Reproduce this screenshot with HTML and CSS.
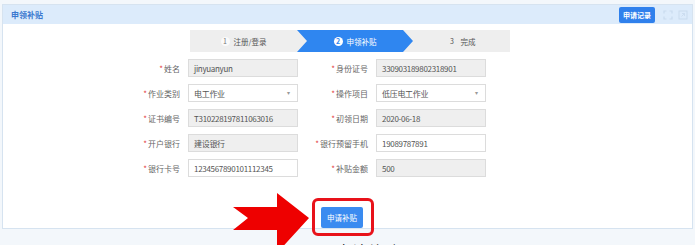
FILE: index.html
```html
<!DOCTYPE html>
<html lang="zh-CN">

<head>
    <meta charset="UTF-8">
    <meta name="viewport" content="width=device-width, initial-scale=1.0">
    <title>申领补贴</title>
    <link rel="stylesheet" href="styles.css">
</head>

<body>
    <div class="panel">
        <div class="panel-head">
            <span class="panel-title">申领补贴</span>
            <div class="head-tools">
                <button class="btn-record">申请记录</button>
                <svg class="tool-icon" width="10" height="10" viewBox="0 0 10 10">
                    <path d="M1 3.5V1h2.5M6.5 1H9v2.5M9 6.5V9H6.5M3.5 9H1V6.5" fill="none" stroke="#c9dbee" stroke-width="1.2"/>
                </svg>
                <svg class="tool-icon" width="10" height="10" viewBox="0 0 10 10">
                    <rect x="1" y="1" width="8" height="8" fill="none" stroke="#c9dbee" stroke-width="1"/>
                    <path d="M3.5 6.5l3-3M4 3.5h2.5V6" fill="none" stroke="#c9dbee" stroke-width="0.9"/>
                </svg>
            </div>
        </div>
        <div class="panel-body">
            <div class="steps">
                <div class="step step-one"><span class="num num-ring">1</span>注册/登录</div>
                <div class="step step-active"><span class="num num-fill">2</span>申领补贴</div>
                <div class="step step-three"><span class="num">3</span>完成</div>
            </div>

            <div class="form">
                <label class="lbl"><i>*</i>姓名</label>
                <div class="field disabled">jinyuanyun</div>
                <label class="lbl"><i>*</i>身份证号</label>
                <div class="field disabled">330903189802318901</div>

                <label class="lbl"><i>*</i>作业类别</label>
                <div class="field select">电工作业<span class="caret">▾</span></div>
                <label class="lbl"><i>*</i>操作项目</label>
                <div class="field select">低压电工作业<span class="caret">▾</span></div>

                <label class="lbl"><i>*</i>证书编号</label>
                <div class="field disabled">T310228197811063016</div>
                <label class="lbl"><i>*</i>初领日期</label>
                <div class="field disabled">2020-06-18</div>

                <label class="lbl"><i>*</i>开户银行</label>
                <div class="field disabled">建设银行</div>
                <label class="lbl"><i>*</i>银行预留手机</label>
                <div class="field">19089787891</div>

                <label class="lbl"><i>*</i>银行卡号</label>
                <div class="field">1234567890101112345</div>
                <label class="lbl"><i>*</i>补贴金额</label>
                <div class="field disabled">500</div>
            </div>

            <div class="actions">
                <span class="highlight">
                    <button class="btn-submit">申请补贴</button>
                    <span class="mark-box"></span>
                    <svg class="mark-arrow" width="78" height="57" viewBox="0 0 78 57">
                        <polygon points="0,14 44,14 44,0 76,25 44,60 44,37 0,37 15,25" fill="#ee0000"/>
                    </svg>
                </span>
            </div>
        </div>
    </div>
    <p class="caption">图 2-3 申请补贴</p>
</body>

</html>
```

FILE: styles.css
```css
body {
    margin: 0;
    padding: 0;
    height: 245px;
    overflow: hidden;
    background-color: #f3f7fb;
    font-family: "Noto Sans CJK SC", "Noto Sans", sans-serif;
    color: #555;
}

.panel {
    margin: 4px 2px 0;
    background-color: #fff;
    border: 1px solid #d6e3f0;
}

.panel-head {
    height: 19px;
    display: flex;
    align-items: center;
    justify-content: space-between;
    padding: 0 4px 0 8px;
    background-color: #dcebfb;
}

.panel-title {
    font-size: 8px;
    font-weight: bold;
    color: #3a78cf;
}

.head-tools {
    display: flex;
    align-items: center;
    gap: 5px;
}

.btn-record {
    height: 16px;
    padding: 0 4px;
    border: none;
    border-radius: 2px;
    background-color: #2f80ec;
    color: #fff;
    font-family: inherit;
    font-size: 7px;
    font-weight: bold;
    margin-right: 3px;
}

.tool-icon {
    display: block;
}

.panel-body {
    padding: 6px 0 5px;
}

/* steps */
.steps {
    display: flex;
    width: 320px;
    height: 22px;
    margin-left: 187px;
    background-color: #eee;
    font-size: 7.5px;
}

.step {
    display: flex;
    align-items: center;
    justify-content: center;
    gap: 4px;
    color: #555;
}

.step-one {
    width: 107px;
}

.step-active {
    width: 116px;
    background-color: #2f86f0;
    color: #fff;
    clip-path: polygon(0 0, 106px 0, 116px 50%, 106px 100%, 0 100%, 10px 50%);
}

.step-three {
    flex: 1;
}

.num {
    display: inline-flex;
    align-items: center;
    justify-content: center;
    width: 9px;
    height: 9px;
    font-size: 7px;
}

.num-ring {
    border-radius: 50%;
    background-color: #fafafa;
    color: #777;
}

.num-fill {
    border-radius: 50%;
    background-color: #fff;
    color: #2f86f0;
    font-weight: bold;
}

/* form */
.form {
    display: grid;
    grid-template-columns: 62px 110px 62px 110px;
    column-gap: 8px;
    row-gap: 7px;
    margin: 7px 0 0 115px;
}

.lbl {
    display: flex;
    align-items: center;
    justify-content: flex-end;
    white-space: nowrap;
    font-size: 8px;
    color: #666;
}

.lbl i {
    font-style: normal;
    color: #e23b3b;
    margin-right: 1px;
}

.field {
    position: relative;
    box-sizing: border-box;
    height: 18px;
    display: flex;
    align-items: center;
    padding: 0 5px;
    border: 1px solid #dcdcdc;
    background-color: #fff;
    font-size: 8px;
    letter-spacing: -0.3px;
    color: #555;
}

.field.disabled {
    background-color: #efefef;
}

.caret {
    position: absolute;
    right: 7px;
    top: 3px;
    font-size: 6px;
    color: #999;
}

/* actions */
.actions {
    margin: 25px 0 0 318px;
    height: 21px;
}

.highlight {
    position: relative;
    display: inline-block;
}

.btn-submit {
    display: block;
    height: 21px;
    padding: 0 6px;
    border: none;
    border-radius: 2px;
    background-color: #3a8bf0;
    color: #fff;
    font-family: inherit;
    font-size: 7.5px;
}

.mark-box {
    position: absolute;
    top: -9px;
    bottom: -8px;
    left: -9px;
    right: -11px;
    border: 3px solid #e8121a;
    border-radius: 6px;
}

.mark-arrow {
    position: absolute;
    left: -88px;
    top: -14px;
    overflow: visible;
    z-index: 2;
}

.caption {
    margin: 11px 0 0;
    padding-right: 10px;
    text-align: center;
    font-size: 14px;
    letter-spacing: 2px;
    color: #222;
}
```
